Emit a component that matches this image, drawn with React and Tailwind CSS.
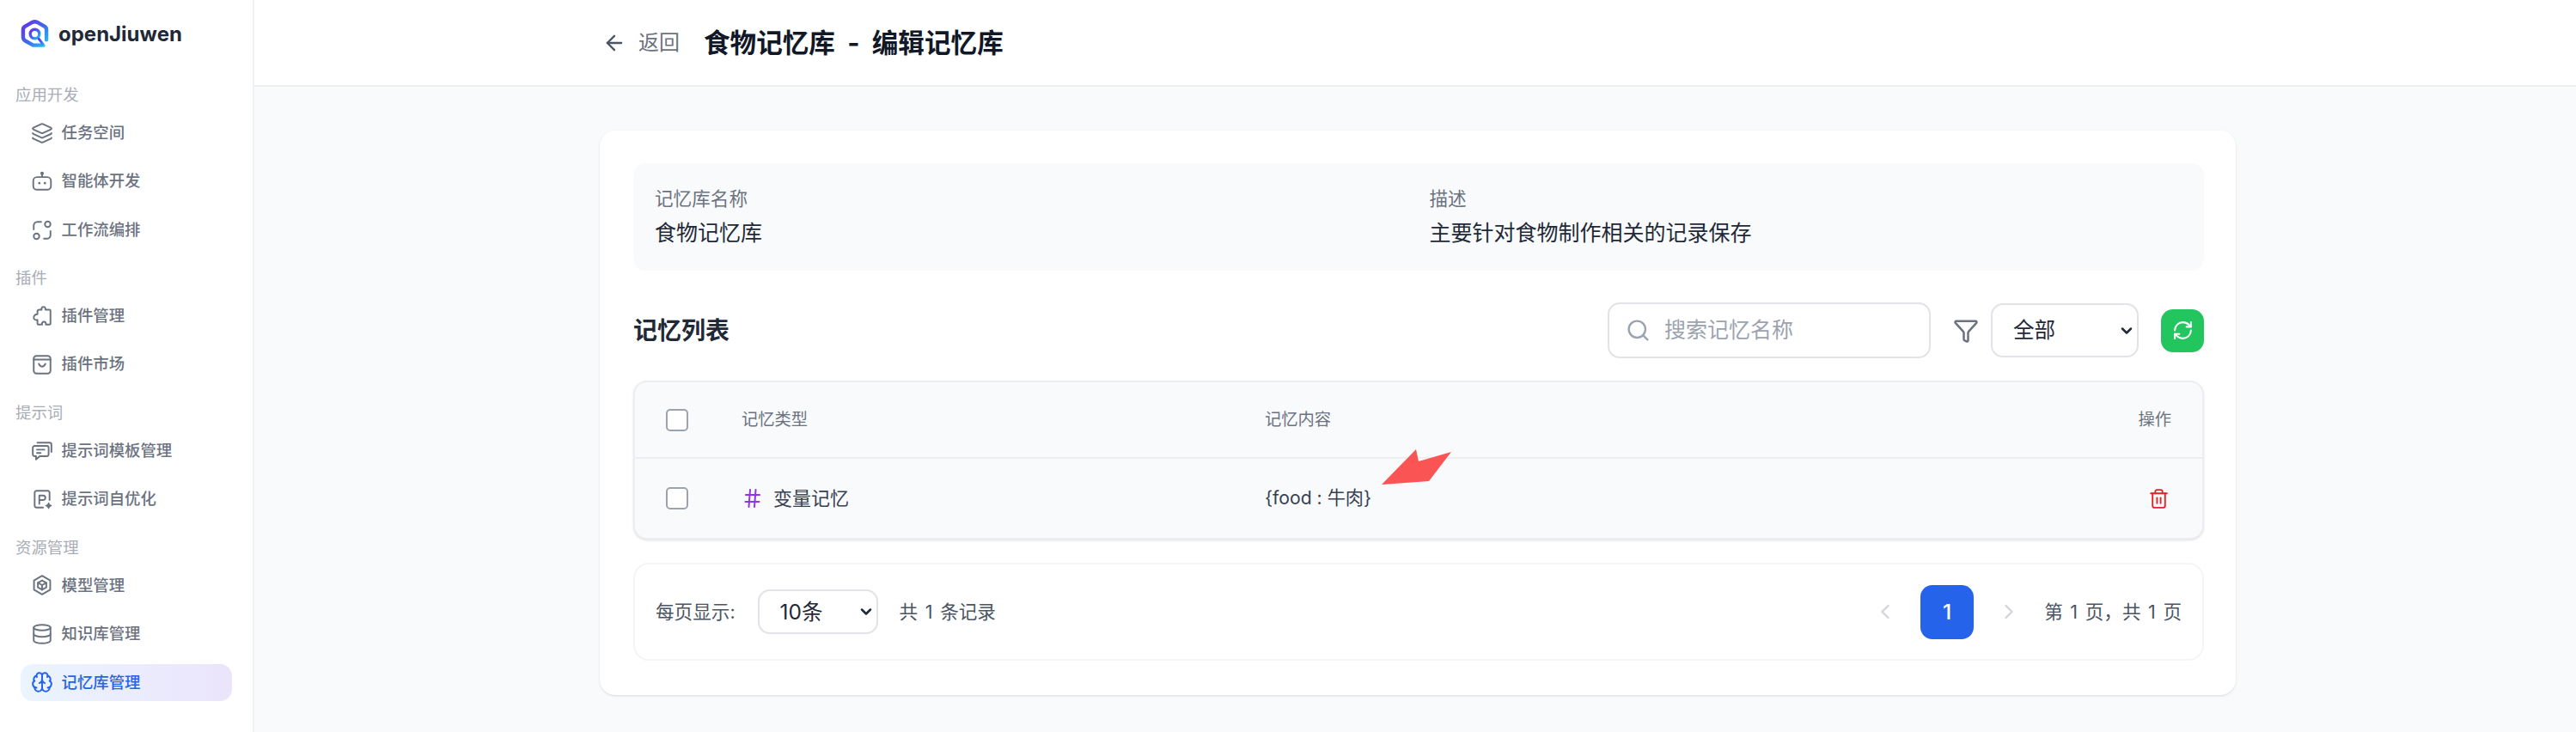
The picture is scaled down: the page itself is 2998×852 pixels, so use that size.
import React from "react";
import { ArrowLeft, Search, Filter, RefreshCw, Trash2, ChevronLeft, ChevronRight, ChevronDown, Layers, Database, Brain } from "lucide-react";

const font = { fontFamily: 'Inter, "Noto Sans CJK SC", sans-serif' };

function S({ children }) {
  return <svg viewBox="0 0 24 24" fill="none" stroke="currentColor" strokeWidth="1.800" strokeLinecap="round" strokeLinejoin="round" className="w-[26px] h-[26px]">{children}</svg>;
}
const BotIcon = () => <S><rect x="2.500" y="7.500" width="19" height="13.500" rx="4" /><circle cx="12" cy="3.500" r="1" /><path d="M12 4.500v3" /><path d="M9 14h.01M15 14h.01" strokeWidth="2.600" /></S>;
const WorkflowIcon = () => <S><circle cx="18" cy="5.500" r="3" /><circle cx="6" cy="18.500" r="3" /><path d="M3 11V7a4 4 0 0 1 4-4h4" /><path d="M21 13v4a4 4 0 0 1-4 4h-3" /></S>;
const PuzzleIcon = () => <S><path d="M9 5h2.500c-.5-2 .5-3 2-3s2.500 1 2 3H20a1 1 0 0 1 1 1v14a1 1 0 0 1-1 1h-4c.5-2-.5-3-2-3s-2.500 1-2 3H8a1 1 0 0 1-1-1v-4c-2 .5-4-.5-4-2.500S5 9.500 7 10V7a2 2 0 0 1 2-2z" /></S>;
const BagIcon = () => <S><rect x="3" y="3" width="18" height="19" rx="3" /><path d="M3 7h18" /><path d="M8.500 11.500c1 2 2.200 3 3.500 3s2.500-1 3.500-3" /></S>;
const ChatIcon = () => <S><path d="M4 6.500h13a2 2 0 0 1 2 2v7a2 2 0 0 1-2 2H9.500l-4 3.500v-3.500H4a2 2 0 0 1-2-2v-7a2 2 0 0 1 2-2z" /><path d="M7 3h13a2 2 0 0 1 2 2v8" /><path d="M6.500 10.500h8M6.500 14h4" /></S>;
const PromptIcon = () => <S><path d="M20 13V5a2 2 0 0 0-2-2H6a2 2 0 0 0-2 2v14a2 2 0 0 0 2 2h7" /><path d="M9 17V8h4a2.500 2.500 0 0 1 0 5H9" /><path d="M19 16l1 2 2 1-2 1-1 2-1-2-2-1 2-1z" fill="currentColor" strokeWidth="1" /></S>;
const ModelIcon = () => <S><path d="M12 2l8.700 5v10L12 22l-8.700-5V7z" /><path d="M12 7l4.500 2.500v5L12 17l-4.500-2.500v-5z" /><path d="M7.500 9.500L12 12l4.500-2.500M12 12v5" /></S>;

const ic = "w-[26px] h-[26px]";
const groups = [
  { label: "应用开发", items: [["任务空间", <Layers key="a" className={ic} strokeWidth={1.8} />], ["智能体开发", <BotIcon key="b" />], ["工作流编排", <WorkflowIcon key="c" />]] },
  { label: "插件", items: [["插件管理", <PuzzleIcon key="a" />], ["插件市场", <BagIcon key="b" />]] },
  { label: "提示词", items: [["提示词模板管理", <ChatIcon key="a" />], ["提示词自优化", <PromptIcon key="b" />]] },
  { label: "资源管理", items: [["模型管理", <ModelIcon key="a" />], ["知识库管理", <Database key="b" className={ic} strokeWidth={1.8} />], ["记忆库管理", <Brain key="c" className={ic} strokeWidth={1.8} />, true]] },
];

function Logo() {
  return (
    <svg viewBox="0 0 34 36" className="w-[33px] h-[35px] shrink-0" fill="none">
      <defs>
        <linearGradient id="lg" x1="0" y1="0" x2="1" y2="1">
          <stop offset="0" stopColor="#6a2ee8" />
          <stop offset="0.55" stopColor="#3d6cf0" />
          <stop offset="1" stopColor="#20c4f0" />
        </linearGradient>
      </defs>
      <path d="M26 30.500H15L6 25.500Q3 24 3 20.500V12Q3 9 6 7.500L14 3Q17 1.500 20 3L28 7.500Q31 9 31 12V24" stroke="url(#lg)" strokeWidth="4.500" strokeLinecap="round" strokeLinejoin="round" />
      <circle cx="17" cy="17" r="5.500" stroke="url(#lg)" strokeWidth="3.500" />
      <path d="M22 23l6 8" stroke="url(#lg)" strokeWidth="3" strokeLinecap="round" />
    </svg>
  );
}

function Sidebar() {
  return (
    <aside className="w-[296px] h-[852px] shrink-0 bg-white border-r-2 border-[#f0f1f4]">
      <div className="h-[80px] pl-[24px] flex items-center gap-[11px]">
        <Logo />
        <span className="text-[24px] font-bold text-[#1f2937] leading-none">openJiuwen</span>
      </div>
      <div className="pt-[18px] flex flex-col gap-[22.300px]">
        {groups.map((g) => (
          <div key={g.label} className="flex flex-col">
            <div className="h-[24px] pl-[18px] text-[18.400px] leading-[24px] text-[#a8adb6] mb-[11px]">{g.label}</div>
            <div className="flex flex-col gap-[13.500px] pl-[24px] pr-[24px]">
              {g.items.map(([t, icon, active]) => (
                <div key={t} className={`h-[43px] rounded-[14px] pl-[12px] flex items-center gap-[9.500px] text-[18.400px] font-medium ${active ? "bg-gradient-to-r from-[#eaf5ff] to-[#ebe4fb] text-[#2563eb]" : "text-[#6b7280]"}`}>
                  {icon}
                  <span>{t}</span>
                </div>
              ))}
            </div>
          </div>
        ))}
      </div>
    </aside>
  );
}

function Arrow() {
  return (
    <svg className="absolute left-[1606px] top-[522px] w-[86px] h-[44px]" viewBox="0 0 86 44">
      <path d="M2 42L42 1L45 15L83 4L57 38Z" fill="#fb5454" />
    </svg>
  );
}

function Sel({ className, value }) {
  return (
    <div className={`relative shrink-0 ${className}`}>
      <select defaultValue={value} className="appearance-none w-full h-full pl-[24px] bg-white border-2 border-[#e1e3e8] rounded-[14px] text-[#1f2937] text-[24.500px]">
        <option>{value}</option>
      </select>
      <ChevronDown className="absolute right-[4px] top-1/2 -translate-y-1/2 w-[20px] h-[20px] text-[#1f2937] pointer-events-none" strokeWidth={3} />
    </div>
  );
}

export default function App() {
  return (
    <div style={font} className="relative flex w-[2998px] h-[852px] overflow-hidden bg-[#f9fafb]">
      <Sidebar />
      <main className="flex-1 min-w-0">
        <header className="h-[101px] bg-white border-b-2 border-[#eceef1] flex items-center pl-[405px]">
          <ArrowLeft className="w-[28px] h-[28px] text-[#4b5563]" />
          <span className="ml-[14px] text-[24px] text-[#6b7280]">返回</span>
          <h1 className="ml-[28px] text-[30.600px] font-bold text-[#111827] [word-spacing:7px]">食物记忆库 - 编辑记忆库</h1>
        </header>
        <div className="ml-[402px] w-[1904px] mt-[51px] bg-white rounded-[18px] shadow-sm pt-[38px] pl-[39px] pr-[37px] pb-[40px]">
          <section className="h-[125px] bg-[#f9fafb] rounded-[14px] px-[25px] grid grid-cols-2 gap-[25px] items-center">
            <div className="-mt-[3px]">
              <div className="text-[21.600px] leading-[30px] text-[#6b7280]">记忆库名称</div>
              <div className="mt-[9px] text-[25px] leading-[32px] text-[#1f2937]">食物记忆库</div>
            </div>
            <div className="-mt-[3px]">
              <div className="text-[21.600px] leading-[30px] text-[#6b7280]">描述</div>
              <div className="mt-[9px] text-[25px] leading-[32px] text-[#1f2937]">主要针对食物制作相关的记录保存</div>
            </div>
          </section>

          <section className="mt-[37px] h-[65px] flex items-center">
            <h2 className="text-[28px] font-semibold text-[#1f2937]">记忆列表</h2>
            <div className="ml-auto flex items-center">
              <div className="w-[376px] h-[65px] border-2 border-[#e1e3e8] rounded-[14px] flex items-center pl-[19px] gap-[16px] text-[25px] text-[#9ca3af] bg-white">
                <Search className="w-[29px] h-[29px]" />
                <span>搜索记忆名称</span>
              </div>
              <Filter className="ml-[26px] w-[30px] h-[30px] text-[#6b7280]" />
              <Sel className="ml-[14px] w-[172px] h-[63px]" value="全部" />
              <button className="ml-[26px] w-[50px] h-[50px] rounded-[14px] bg-[#22c55e] flex items-center justify-center text-white">
                <RefreshCw className="w-[25px] h-[25px]" />
              </button>
            </div>
          </section>

          <section className="mt-[26px] h-[185px] bg-[#f9fafb] border-2 border-[#eceef1] rounded-[16px] shadow-sm overflow-hidden">
            <div className="h-[89px] flex items-center border-b-2 border-[#eceef1] text-[19.300px] text-[#6b7280]">
              <div className="w-[124px] pl-[36px] shrink-0"><div className="w-[26px] h-[26px] border-2 border-[#9ca3af] rounded-[5px] bg-white" /></div>
              <div className="w-[609px] shrink-0">记忆类型</div>
              <div className="flex-1">记忆内容</div>
              <div className="pr-[36px]">操作</div>
            </div>
            <div className="h-[92px] flex items-center text-[22px] text-[#374151]">
              <div className="w-[124px] pl-[36px] shrink-0"><div className="w-[26px] h-[26px] border-2 border-[#9ca3af] rounded-[5px] bg-white" /></div>
              <div className="w-[609px] shrink-0 flex items-center gap-[15px]">
                <svg viewBox="0 0 19 24" className="ml-[3px] w-[19px] h-[24px] text-[#9333ea]" fill="none" stroke="currentColor" strokeWidth="2" strokeLinecap="round">
                  <path d="M7 2L5.500 22M13.500 2L12 22M2 8h16M1.500 16h16" />
                </svg>
                <span>变量记忆</span>
              </div>
              <div className="flex-1 text-[21.200px]">{"{food : 牛肉}"}</div>
              <div className="pr-[38px]"><Trash2 className="w-[25px] h-[25px] text-[#dc2626]" strokeWidth={1.8} /></div>
            </div>
          </section>

          <section className="mt-[27px] h-[114px] bg-white border-2 border-[#f4f5f7] rounded-[18px] flex items-center pl-[24px] pr-[24px] text-[21.600px] text-[#4b5563] [word-spacing:2.500px]">
            <span>每页显示:</span>
            <Sel className="ml-[26px] w-[140px] h-[52px]" value="10条" />
            <span className="ml-[25px]">共 1 条记录</span>
            <div className="ml-auto flex items-center">
              <ChevronLeft className="w-[28px] h-[28px] text-[#d1d5db]" />
              <button className="ml-[27px] w-[62px] h-[63px] rounded-[14px] bg-[#2563eb] text-white text-[24.500px] font-medium">1</button>
              <ChevronRight className="ml-[27px] w-[28px] h-[28px] text-[#d1d5db]" />
              <span className="ml-[27px]">第 1 页，共 1 页</span>
            </div>
          </section>
        </div>
      </main>
      <Arrow />
    </div>
  );
}
